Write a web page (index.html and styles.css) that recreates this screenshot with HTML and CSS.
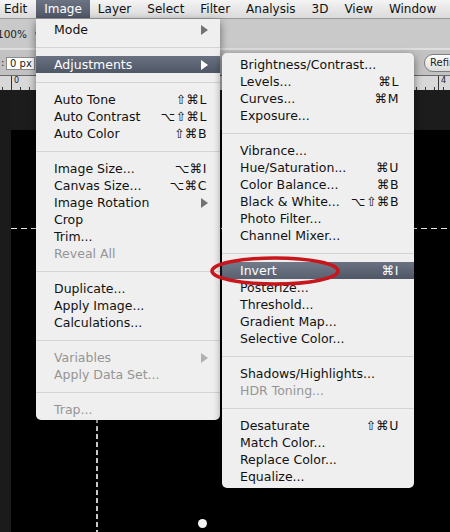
FILE: index.html
```html
<!DOCTYPE html>
<html lang="en">
<head>
  <meta charset="UTF-8" />
  <title>Image &gt; Adjustments &gt; Invert</title>
  <link rel="stylesheet" href="styles.css">
</head>
<body>
  <div class="app">
    <nav class="menubar">
      <span class="menubar-item">Edit</span>
      <span class="menubar-item active">Image</span>
      <span class="menubar-item">Layer</span>
      <span class="menubar-item">Select</span>
      <span class="menubar-item">Filter</span>
      <span class="menubar-item">Analysis</span>
      <span class="menubar-item">3D</span>
      <span class="menubar-item">View</span>
      <span class="menubar-item">Window</span>
    </nav>

    <div class="toolbar">
      <span class="zoom-level">100%</span>
      <span class="caret">&#9662;</span>
    </div>

    <div class="options">
      <span class="field-label">:</span>
      <span class="field">0 px</span>
      <span class="refine">Refine</span>
    </div>

    <div class="ruler">
      <span class="ruler-mark mark-0">0</span>
      <span class="ruler-mark mark-4">4</span>
    </div>

    <div class="workspace">
      <div class="panel-strip"></div>
      <div class="pasteboard">
        <div class="canvas">
          <div class="guide guide-h"></div>
          <div class="guide guide-v"></div>
          <div class="dot"></div>
        </div>
      </div>
    </div>

    <!-- Image menu -->
    <ul class="menu menu-image">
      <li class="item">Mode <svg class="arrow" viewBox="0 0 7 10"><path d="M0 0 L7 5 L0 10 Z"/></svg></li>
      <li class="sep"></li>
      <li class="item selected">Adjustments <svg class="arrow" viewBox="0 0 7 10"><path d="M0 0 L7 5 L0 10 Z"/></svg></li>
      <li class="sep"></li>
      <li class="item">Auto Tone <span class="keys">⇧⌘L</span></li>
      <li class="item">Auto Contrast <span class="keys">⌥⇧⌘L</span></li>
      <li class="item">Auto Color <span class="keys">⇧⌘B</span></li>
      <li class="sep"></li>
      <li class="item">Image Size... <span class="keys">⌥⌘I</span></li>
      <li class="item">Canvas Size... <span class="keys">⌥⌘C</span></li>
      <li class="item">Image Rotation <svg class="arrow" viewBox="0 0 7 10"><path d="M0 0 L7 5 L0 10 Z"/></svg></li>
      <li class="item">Crop</li>
      <li class="item">Trim...</li>
      <li class="item disabled">Reveal All</li>
      <li class="sep"></li>
      <li class="item">Duplicate...</li>
      <li class="item">Apply Image...</li>
      <li class="item">Calculations...</li>
      <li class="sep"></li>
      <li class="item disabled">Variables <svg class="arrow" viewBox="0 0 7 10"><path d="M0 0 L7 5 L0 10 Z"/></svg></li>
      <li class="item disabled">Apply Data Set...</li>
      <li class="sep"></li>
      <li class="item disabled">Trap...</li>
    </ul>

    <!-- Adjustments submenu -->
    <ul class="menu menu-adjust">
      <li class="item">Brightness/Contrast...</li>
      <li class="item">Levels... <span class="keys">⌘L</span></li>
      <li class="item">Curves... <span class="keys">⌘M</span></li>
      <li class="item">Exposure...</li>
      <li class="sep"></li>
      <li class="item">Vibrance...</li>
      <li class="item">Hue/Saturation... <span class="keys">⌘U</span></li>
      <li class="item">Color Balance... <span class="keys">⌘B</span></li>
      <li class="item">Black &amp; White... <span class="keys">⌥⇧⌘B</span></li>
      <li class="item">Photo Filter...</li>
      <li class="item">Channel Mixer...</li>
      <li class="sep"></li>
      <li class="item selected">Invert <span class="keys">⌘I</span></li>
      <li class="item">Posterize...</li>
      <li class="item">Threshold...</li>
      <li class="item">Gradient Map...</li>
      <li class="item">Selective Color...</li>
      <li class="sep"></li>
      <li class="item">Shadows/Highlights...</li>
      <li class="item disabled">HDR Toning...</li>
      <li class="sep"></li>
      <li class="item">Desaturate <span class="keys">⇧⌘U</span></li>
      <li class="item">Match Color...</li>
      <li class="item">Replace Color...</li>
      <li class="item">Equalize...</li>
    </ul>

    <svg class="callout" viewBox="0 0 136 34">
      <ellipse cx="68" cy="17" rx="63" ry="13" />
    </svg>
  </div>
</body>
</html>
```

FILE: styles.css
```css
* {
  box-sizing: border-box;
}
body {
  margin: 0;
  background: #000;
  font-family: "DejaVu Sans", "Liberation Sans", sans-serif;
}

.app {
  position: relative;
  width: 450px;
  height: 532px;
  overflow: hidden;
  display: flex;
  flex-direction: column;
  background: #000;
}

/* top menu bar */
.menubar {
  display: flex;
  height: 19px;
  flex: none;
  background: linear-gradient(#f4f4f4, #dadada);
  border-bottom: 1px solid #9a9a9a;
  font-size: 12px;
  line-height: 18px;
  color: #111;
  white-space: nowrap;
}
.menubar-item {
  padding: 0 8px;
}
.menubar-item:first-child {
  padding-left: 4px;
  padding-right: 9px;
}
.menubar-item.active {
  background: linear-gradient(#6c7484, #4f5767);
  color: #fff;
}

/* app bars */
.toolbar {
  height: 31px;
  flex: none;
  display: flex;
  align-items: center;
  gap: 8px;
  background: #c9c9c9;
  border-bottom: 2px solid #dedede;
  font-size: 10.5px;
  color: #222;
}
.zoom-level {
  margin-left: -3px;
}
.caret {
  font-size: 9px;
}

.options {
  height: 26px;
  flex: none;
  display: flex;
  align-items: center;
  background: #c2c2c2;
  border-bottom: 1px solid #6a6a6a;
  font-size: 10px;
  color: #222;
}
.field-label {
  width: 6px;
  padding-left: 1px;
}
.field {
  width: 29px;
  height: 13px;
  line-height: 11px;
  padding-left: 3px;
  background: #fff;
  border: 1px solid #8a8a8a;
  margin-top: 2px;
}
.refine {
  margin-left: auto;
  margin-right: -30px;
  width: 56px;
  height: 18px;
  line-height: 16px;
  padding-left: 5px;
  border: 1px solid #7d7d7d;
  border-radius: 9px;
  background: linear-gradient(#fdfdfd, #dcdcdc);
}

.ruler {
  position: relative;
  height: 14px;
  flex: none;
  background:
    repeating-linear-gradient(90deg, #333 0 1px, transparent 1px 9px) 2px 100% / 100% 3px no-repeat,
    #d8d8d8;
  font-size: 8px;
  color: #222;
}
.ruler-mark {
  position: absolute;
  top: 0;
  height: 14px;
  padding-left: 2px;
  border-left: 1px solid #333;
  line-height: 10px;
}
.mark-0 { left: 11px; }
.mark-4 { left: 438px; }

/* document area */
.workspace {
  flex: 1;
  display: flex;
  background: #1b1b1b;
}
.panel-strip {
  width: 11px;
  flex: none;
  background: #1b1b1b;
}
.pasteboard {
  flex: 1;
  display: flex;
  padding-top: 40px;
  background: #1c1c1c;
}
.canvas {
  position: relative;
  flex: 1;
  background: #000;
}
.guide {
  position: absolute;
}
.guide-h {
  top: 98px;
  left: 0;
  right: 0;
  height: 1px;
  background: repeating-linear-gradient(90deg, #e4e4e4 0 6px, transparent 6px 10px);
}
.guide-v {
  left: 85px;
  top: 0;
  bottom: 0;
  width: 2px;
  background: repeating-linear-gradient(#c8c8c8 0 5px, transparent 5px 8px);
}
.dot {
  left: 187px;
  top: 389px;
  position: absolute;
  width: 9px;
  height: 9px;
  border-radius: 50%;
  background: #f4f4f4;
}

/* dropdown menus */
.menu {
  position: absolute;
  margin: 0;
  list-style: none;
  background: #efefef;
  box-shadow: 0 3px 9px rgba(0, 0, 0, 0.5);
  font-size: 12.5px;
  color: #111;
}
.menu-image {
  left: 36px;
  top: 19px;
  width: 184px;
  padding: 2px 0;
  border-radius: 0 0 5px 5px;
}
.menu-adjust {
  left: 222px;
  top: 53px;
  width: 192px;
  padding: 3px 0;
  border-radius: 5px;
}
.item {
  display: flex;
  justify-content: space-between;
  align-items: center;
  height: 17px;
  line-height: 17px;
  padding: 0 13px 0 18px;
  white-space: nowrap;
}
.menu-adjust .item {
  padding-right: 15px;
}
.item.selected {
  background: linear-gradient(#6a7282, #4f5767);
  color: #fff;
}
.item.disabled {
  color: #959595;
}
.keys {
  letter-spacing: 0.5px;
}
.arrow {
  width: 7px;
  height: 10px;
  margin-right: -1px;
  fill: #727272;
}
.selected .arrow {
  fill: #fff;
}
.disabled .arrow {
  fill: #b0b0b0;
}
.sep {
  height: 18px;
  display: flex;
  align-items: center;
}
.sep::before {
  content: "";
  flex: 1;
  height: 1px;
  background: #d3d3d3;
}

/* red marker drawn over the screenshot */
.callout {
  position: absolute;
  left: 207px;
  top: 254px;
  width: 136px;
  height: 34px;
  overflow: visible;
}
.callout ellipse {
  fill: rgba(255, 255, 255, 0.06);
  stroke: #c8161d;
  stroke-width: 3.5;
}
```
